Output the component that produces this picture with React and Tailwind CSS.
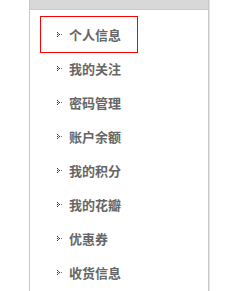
import React from "react";

const items = ["个人信息", "我的关注", "密码管理", "账户余额", "我的积分", "我的花瓣", "优惠券", "收货信息"];

const Bullet = () => (
  <svg width="5" height="5" viewBox="0 0 5 5" className="shrink-0" shapeRendering="crispEdges">
    <rect x="0" y="0" width="1" height="1" fill="#333" />
    <rect x="0" y="2" width="1" height="1" fill="#333" />
    <rect x="0" y="4" width="1" height="1" fill="#333" />
    <rect x="1" y="1" width="1" height="1" fill="#666" />
    <rect x="1" y="3" width="1" height="1" fill="#666" />
    <rect x="2" y="2" width="1" height="1" fill="#333" />
    <rect x="4" y="2" width="1" height="1" fill="#777" />
  </svg>
);

const App = () => {
  return (
    <div className="w-[235px] h-[291px] bg-white overflow-hidden">
      <div className="ml-[29px] w-[180px] h-[291px] border-l border-r border-[#c8c8c8] shadow-[1px_0_0_#e6e6e6]">
        <div className="h-[10px] bg-[#d8d8d8] border-b border-[#c9c9c9]" />
        <ul className="pt-[6px]">
          {items.map((label, i) => (
            <li
              key={label}
              className={
                i === 0
                  ? "ml-[10px] w-[98px] h-[37px] -mb-[2px] border border-[#ff0000] flex items-center pl-[16px]"
                  : "ml-[10px] w-[98px] h-[34px] flex items-center pl-[17px]"
              }
            >
              <Bullet />
              <span
                className="ml-[7px] text-[13px] font-bold text-[#666] leading-none"
                style={{ fontFamily: '"Noto Sans CJK SC", sans-serif' }}
              >
                {label}
              </span>
            </li>
          ))}
        </ul>
      </div>
    </div>
  );
};

export default App;
